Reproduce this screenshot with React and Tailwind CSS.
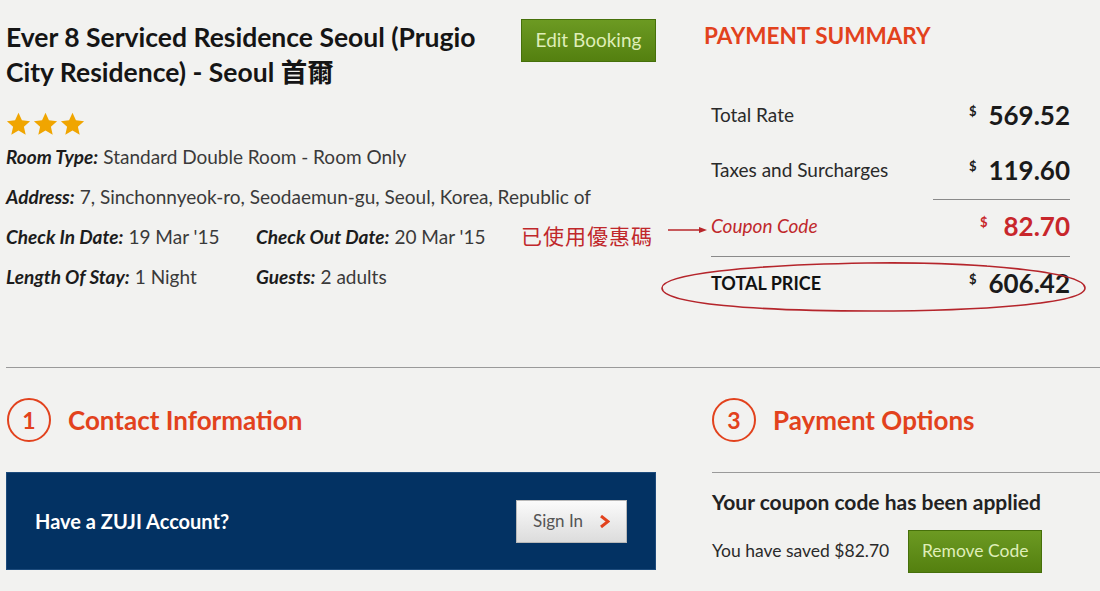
import React from "react"

const red = "text-[#e2421d]"

const Star = () => (
  <svg width="25" height="24" viewBox="0 0 24 23">
    <path d="M12 0.8l3.3 7.2 7.8.8-5.9 5.3 1.7 7.7L12 17.8l-6.9 4 1.7-7.7L.9 8.8l7.8-.8z" fill="#f0a500" />
  </svg>
)

const Money = ({ value, color = "text-[#1a1a1a]", gap = "ml-[12px]" }) => (
  <div className={`flex items-start ${color}`}>
    <span className="text-[13px] font-bold leading-none mt-[4px]">$</span>
    <span className={`${gap} text-[26px] font-bold leading-[28px]`}>{value}</span>
  </div>
)

const Info = ({ label, value, w }) => (
  <div className={`flex items-center ${w || ""}`}>
    <span className="font-bold italic text-[#1c1c1c]">{label}:</span>
    <span className="ml-[5px] text-[#3a3a3a]">{value}</span>
  </div>
)

const StepTitle = ({ n, title }) => (
  <div className="flex items-center h-[44px]">
    <div className={`w-[44px] h-[44px] rounded-full border-2 border-[#e2421d] flex items-center justify-center text-[23px] font-bold ${red}`}>{n}</div>
    <span className={`ml-[17px] text-[26px] font-bold ${red}`}>{title}</span>
  </div>
)

export default function App() {
  return (
    <div className="w-[1100px] h-[591px] overflow-hidden bg-[#f2f2f0] font-['Lato','Noto_Sans_CJK_TC',sans-serif]">
      <div className="relative flex pl-[6px] h-[367px]">
        <div className="w-[650px] flex flex-col">
          <div className="flex justify-between">
            <h1 className="pt-[20px] text-[26.5px] leading-[35px] font-bold text-[#151515]">
              Ever 8 Serviced Residence Seoul (Prugio<br />City Residence) - Seoul 首爾
            </h1>
            <button className="mt-[19px] w-[135px] h-[43px] bg-gradient-to-b from-[#6c9a22] to-[#54800f] border border-[#46700a] text-[#dfeeb8] text-[19px]">
              Edit Booking
            </button>
          </div>
          <div className="flex gap-[2px] mt-[22px] h-[24px]">
            <Star /><Star /><Star />
          </div>
          <div className="text-[19px] flex flex-col mt-[1px]">
            <div className="h-[40px] flex items-center"><Info label="Room Type" value="Standard Double Room - Room Only" /></div>
            <div className="h-[40px] flex items-center"><Info label="Address" value="7, Sinchonnyeok-ro, Seodaemun-gu, Seoul, Korea, Republic of" /></div>
            <div className="h-[40px] flex items-center">
              <Info label="Check In Date" value="19 Mar '15" w="w-[250px]" />
              <Info label="Check Out Date" value="20 Mar '15" />
            </div>
            <div className="h-[40px] flex items-center">
              <Info label="Length Of Stay" value="1 Night" w="w-[250px]" />
              <Info label="Guests" value="2 adults" />
            </div>
          </div>
        </div>

        <div className="ml-[48px] w-[366px] flex flex-col">
          <h2 className={`mt-[21px] h-[30px] leading-[30px] text-[22.5px] font-bold ${red}`}>PAYMENT SUMMARY</h2>
          <div className="pl-[7px] flex flex-col text-[19px] text-[#2a2a2a]">
            <div className="mt-[44px] h-[40px] flex items-center justify-between">
              <span>Total Rate</span><Money value="569.52" />
            </div>
            <div className="mt-[15px] h-[40px] flex items-center justify-between">
              <span>Taxes and Surcharges</span><Money value="119.60" />
            </div>
            <div className="mt-[9px] ml-[222px] h-px bg-[#8a8a8a]" />
            <div className="mt-[6px] h-[40px] flex items-center justify-between">
              <span className="italic text-[#c0282b]">Coupon Code</span>
              <Money value="82.70" color="text-[#c8262b]" gap="ml-[16px]" />
            </div>
            <div className="mt-[10px] h-px bg-[#8a8a8a]" />
            <div className="mt-[6px] h-[40px] flex items-center justify-between">
              <span className="font-bold text-[18px] text-[#111]">TOTAL PRICE</span><Money value="606.42" />
            </div>
          </div>
        </div>

        <div className="absolute left-[521px] top-[220px] flex items-center">
          <span className="text-[21px] text-[#c0282b] tracking-[1px]">已使用優惠碼</span>
          <svg width="42" height="12" viewBox="0 0 42 12" className="ml-[14px] -mt-[12px]">
            <path d="M1 6 L34 6" stroke="#b8262a" strokeWidth="1.5" />
            <path d="M32 3 L40 6 L32 9 Z" fill="#b8262a" />
          </svg>
        </div>

        <svg width="432" height="54" viewBox="0 0 432 54" className="absolute left-[657px] top-[260px]" fill="none">
          <path d="M230 3 C330 3 428 12 428 28 C428 44 320 51 215 51 C100 51 5 44 5 28 C5 14 90 5 210 3 C260 2 300 4 330 6" stroke="#b5252b" strokeWidth="1.6" />
        </svg>
      </div>

      <div className="ml-[6px] h-px bg-[#9a9a9a]" />

      <div className="flex pl-[6px]">
        <div className="w-[650px] flex flex-col">
          <div className="mt-[30px] ml-[1px]"><StepTitle n="1" title="Contact Information" /></div>
          <div className="mt-[30px] h-[98px] bg-[#033263] border border-[#1d4b7c] flex items-center justify-between pl-[28px] pr-[28px]">
            <span className="text-white text-[20px] font-bold">Have a ZUJI Account?</span>
            <button className="w-[111px] h-[43px] bg-gradient-to-b from-[#fbfbfb] to-[#dcdcdc] border border-[#b9b9b9] flex items-center justify-center gap-[16px] text-[17px] text-[#555]">
              Sign In
              <svg width="11" height="13" viewBox="0 0 11 13">
                <path d="M2 1 L9 6.5 L2 12" stroke="#e2421d" strokeWidth="3" fill="none" />
              </svg>
            </button>
          </div>
        </div>

        <div className="ml-[56px] flex-1 flex flex-col">
          <div className="mt-[30px]"><StepTitle n="3" title="Payment Options" /></div>
          <div className="mt-[30px] h-px bg-[#9a9a9a]" />
          <div className="mt-[15px] h-[28px] leading-[28px] text-[21px] font-bold text-[#222]">Your coupon code has been applied</div>
          <div className="mt-[14px] flex items-center">
            <span className="text-[17.5px] text-[#2a2a2a]">You have saved $82.70</span>
            <button className="ml-[19px] w-[134px] h-[43px] bg-gradient-to-b from-[#6c9a22] to-[#54800f] border border-[#46700a] text-[#dfeeb8] text-[17.5px]">
              Remove Code
            </button>
          </div>
        </div>
      </div>
    </div>
  )
}
